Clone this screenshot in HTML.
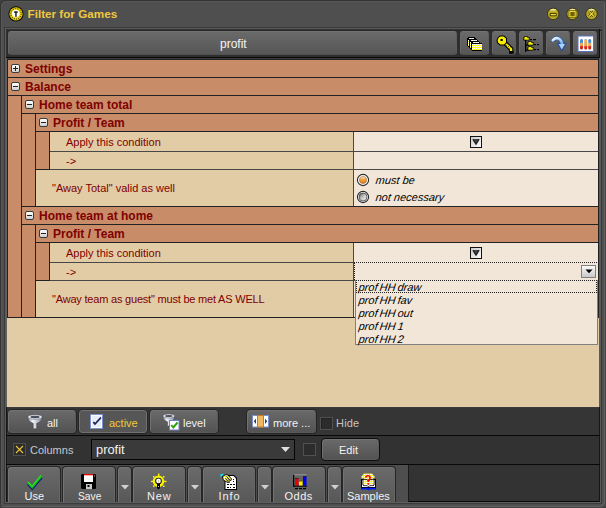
<!DOCTYPE html>
<html><head><meta charset="utf-8">
<style>
*{box-sizing:border-box;margin:0;padding:0}
html,body{width:606px;height:508px;overflow:hidden}
body{background:#3e3e3e;position:relative;font-family:"Liberation Sans",sans-serif}
.a{position:absolute}
.t{position:absolute;white-space:pre;line-height:1}
.btn{position:absolute;border-radius:3px;background:linear-gradient(#6a6a6a,#565656);border:1px solid #5e5e5e;border-top-color:#727272;border-left-color:#686868;border-bottom-color:#505050}
.btn.on{background:#555;border:1px solid #6c6c6c}
.ob{position:absolute;border:1px solid #252525;border-radius:4px;background:linear-gradient(#6a6a6a,#525252);box-shadow:inset 1px 1px 0 #727272,inset -1px -1px 0 #5a5a5a}
.ob.on{background:#565656;box-shadow:inset 0 0 0 1px #727272}
.tb{position:absolute;top:466px;height:36px;border:1px solid #262626;border-bottom:none;border-radius:4px 4px 0 0;background:linear-gradient(#6a6a6a,#585858);box-shadow:inset 1px 1px 0 #747474,inset -1px 0 0 #666}
.bt{font-size:11px;color:#f2f2f2;transform-origin:0 0}
.hl{position:absolute;height:1px}
.vl{position:absolute;width:1px}
.pm{position:absolute;width:9px;height:9px;border:1px solid #3a3a3a;border-radius:2px;background:linear-gradient(#ffffff,#d0d0d0)}
.pm:before{content:"";position:absolute;left:1px;top:3px;width:5px;height:1px;background:#222}
.pm.p:after{content:"";position:absolute;left:3px;top:1px;width:1px;height:5px;background:#222}
.hd{font-weight:bold;font-size:12px;color:#800000}
.lb{font-size:11px;color:#800000}
</style></head><body>

<!-- window frame -->
<div class="a" style="left:0;top:0;width:606px;height:508px;border-radius:5px;background:#4f4f4f;box-shadow:inset 1px 1px 0 #333,inset 2px 2px 0 #585858,inset -1px -1px 0 #444,inset -2px -2px 0 #606060"></div>

<!-- title icon -->
<svg class="a" style="left:8px;top:6px" width="16" height="16" viewBox="0 0 16 16">
<circle cx="8" cy="7.8" r="7.6" fill="#0a0a0a"/>
<circle cx="8" cy="7.8" r="6.6" fill="#e8d000"/>
<circle cx="8" cy="7.8" r="5.2" fill="none" stroke="#1a1a00" stroke-width="1" stroke-dasharray="1 1.3"/>
<circle cx="8" cy="7.8" r="6.3" fill="none" stroke="#a09000" stroke-width="0.6" stroke-dasharray="1.5 2"/>
<circle cx="7.8" cy="7.6" r="3.8" fill="#fff"/>
<rect x="6" y="5.4" width="3.8" height="1.4" fill="#222"/>
<rect x="7.2" y="5.4" width="1.5" height="5.5" fill="#222"/>
</svg>
<div class="t" style="left:27.5px;top:7.5px;font-size:11.7px;font-weight:bold;color:#f0c840">Filter for Games</div>

<!-- window buttons -->
<svg class="a" style="left:546px;top:6px" width="54" height="16" viewBox="0 0 54 16">
<defs>
<radialGradient id="wg" cx="0.5" cy="0.55" r="0.6"><stop offset="0" stop-color="#a89418"/><stop offset="0.7" stop-color="#c0b028"/><stop offset="1" stop-color="#8a7a10"/></radialGradient>
<linearGradient id="wh" x1="0" y1="0" x2="0" y2="1"><stop offset="0" stop-color="#fffff0"/><stop offset="1" stop-color="#e8d840" stop-opacity="0.2"/></linearGradient>
</defs>
<g id="wb1"><circle cx="7.2" cy="7.9" r="5.7" fill="url(#wg)" stroke="#302a08" stroke-width="0.8"/><ellipse cx="7.2" cy="4.3" rx="3" ry="1.5" fill="url(#wh)"/></g>
<rect x="4.2" y="7.6" width="6" height="2.2" fill="#f0e040" stroke="#302800" stroke-width="0.8"/>
<circle cx="26.5" cy="7.9" r="5.7" fill="url(#wg)" stroke="#302a08" stroke-width="0.8"/><ellipse cx="26.5" cy="4.3" rx="3" ry="1.5" fill="url(#wh)"/>
<rect x="22.8" y="4.4" width="7.4" height="7.4" fill="#302800"/>
<rect x="23.8" y="5.4" width="5.4" height="5.4" fill="#706000" stroke="#f0e040" stroke-width="1.1"/>
<circle cx="45.5" cy="7.9" r="5.7" fill="url(#wg)" stroke="#302a08" stroke-width="0.8"/><ellipse cx="45.5" cy="4.3" rx="3" ry="1.5" fill="url(#wh)"/>
<path d="M43.2 5.3 L47.8 10.5 M47.8 5.3 L43.2 10.5" stroke="#302800" stroke-width="2.4"/>
<path d="M43.2 5.3 L47.8 10.5 M47.8 5.3 L43.2 10.5" stroke="#f0e040" stroke-width="1.2"/>
</svg>

<!-- inner panel frame -->
<div class="a" style="left:4px;top:27px;width:598px;height:477px;background:#2e2e2e;box-shadow:inset 1px 1px 0 #3a3a3a,inset 2px 2px 0 #5a5a5a,inset 3px 3px 0 #333,inset 4px 4px 0 #2a2a2a,inset -1px -1px 0 #363636,inset -2px -2px 0 #5a5a5a"></div>

<!-- toolbar -->
<div class="btn" style="left:8px;top:31px;width:449px;height:24px"></div>
<div class="t" style="left:220px;top:38px;font-size:12px;color:#f4f4f4">profit</div>
<div class="btn" style="left:460px;top:31px;width:29px;height:24px"></div>
<div class="btn" style="left:492px;top:31px;width:24px;height:24px"></div>
<div class="btn" style="left:519px;top:31px;width:24px;height:24px"></div>
<div class="btn" style="left:546px;top:31px;width:24px;height:24px"></div>
<div class="btn" style="left:573px;top:31px;width:24px;height:24px;background:linear-gradient(#6a6a6a,#5c5c5c)"></div>
<div class="vl" style="left:599px;top:29px;height:28px;background:#111"></div>


<!-- toolbar icons -->
<svg class="a" style="left:465px;top:35px" width="20" height="18" viewBox="0 0 20 18" shape-rendering="crispEdges">
<defs><pattern id="chk" width="2" height="2" patternUnits="userSpaceOnUse"><rect width="2" height="2" fill="#ffff00"/><rect width="1" height="1" fill="#ffffff"/><rect x="1" y="1" width="1" height="1" fill="#ffffff"/></pattern></defs>
<path d="M2 3 L3 3 L3 2 L9 2 L10 3 L11 3 L11 4 L12 4 L12 5 L13 5 L13 6 L14 6 L14 7 L15 7 L15 8 L17 8 L17 16 L7 16 L7 15 L6 15 L6 14 L5 14 L5 13 L4 13 L4 12 L3 12 L3 11 L2 11 Z" fill="#000"/>
<rect x="4" y="3" width="5" height="1" fill="url(#chk)"/>
<rect x="3" y="5" width="1" height="6" fill="url(#chk)"/>
<rect x="6" y="5" width="5" height="1" fill="url(#chk)"/>
<rect x="5" y="7" width="1" height="6" fill="url(#chk)"/>
<rect x="8" y="7" width="5" height="1" fill="url(#chk)"/>
<rect x="11" y="5" width="1" height="1" fill="#fff"/>
<rect x="13" y="7" width="1" height="1" fill="#fff"/>
<rect x="7" y="9" width="10" height="6" fill="url(#chk)"/>
</svg>
<svg class="a" style="left:492px;top:32px" width="26" height="22" viewBox="0 0 26 22">
<path d="M12.5 10.5 L19 17 L19.3 19.5" stroke="#000" stroke-width="4.6" fill="none" stroke-linecap="square" stroke-linejoin="round"/>
<path d="M12.5 10.5 L19 17 L19.2 19" stroke="#f8f000" stroke-width="2.4" fill="none"/>
<path d="M6 5 L8 3.5 L12 3.5 L15 6 L15 11 L12.5 13.5 L8 13.5 L5 11 L4.5 8 Z" fill="#000"/>
<path d="M6.8 5.6 L8.4 4.5 L11.6 4.5 L14 6.5 L14 10.6 L12 12.5 L8.4 12.5 L6 10.5 L5.6 8 Z" fill="#f8f000"/>
<rect x="8.5" y="7" width="2.2" height="2" fill="#000"/>
<path d="M14.5 13.5 L15.2 12.8 M16 15 L16.7 14.3 M17.5 16.5 L18.2 15.8" stroke="#000" stroke-width="0.9"/>
</svg>
<svg class="a" style="left:523px;top:35px" width="18" height="18" viewBox="0 0 18 18">
<rect x="2" y="5" width="1.3" height="12" fill="#000"/>
<rect x="3" y="9.5" width="3" height="1.2" fill="#000"/>
<rect x="3" y="14.5" width="3" height="1.2" fill="#000"/>
<path d="M0.5 2 L2.5 1 L4 1 L5 2 L6.5 2 L6.5 5.5 L0.5 5.5 Z" fill="#000"/>
<path d="M1.3 2.5 L2.5 1.8 L3.8 1.8 L4.5 2.8 L5.8 2.8 L5.8 4.8 L1.3 4.8 Z" fill="#f0f000"/>
<path d="M4.5 7 L6.5 6 L8 6 L9 7 L10.5 7 L10.5 10.5 L4.5 10.5 Z" fill="#000"/>
<path d="M5.3 7.5 L6.5 6.8 L7.8 6.8 L8.5 7.8 L9.8 7.8 L9.8 9.8 L5.3 9.8 Z" fill="#f0f000"/>
<path d="M4.5 12 L6.5 11 L8 11 L9 12 L10.5 12 L10.5 15.5 L4.5 15.5 Z" fill="#000"/>
<path d="M5.3 12.5 L6.5 11.8 L7.8 11.8 L8.5 12.8 L9.8 12.8 L9.8 14.8 L5.3 14.8 Z" fill="#f0f000"/>
<rect x="7" y="4" width="2" height="1.2" fill="#000"/><rect x="10" y="4" width="3" height="1.2" fill="#000"/>
<rect x="11" y="9" width="2" height="1.2" fill="#000"/><rect x="14" y="9" width="2" height="1.2" fill="#000"/>
<rect x="11" y="14" width="2" height="1.2" fill="#000"/><rect x="14" y="14" width="2" height="1.2" fill="#000"/>
</svg>
<svg class="a" style="left:546px;top:32px" width="26" height="22" viewBox="0 0 26 22">
<defs><linearGradient id="arw" x1="0" y1="0" x2="1" y2="1"><stop offset="0" stop-color="#f0f8ff"/><stop offset="1" stop-color="#78b4e8"/></linearGradient></defs>
<path d="M6.8 8.3 C9 5.3 14.5 4.8 16 11.5" stroke="#3060b0" stroke-width="3.9" fill="none" stroke-linecap="round"/>
<path d="M11.2 11.2 L20.3 11.2 L15.8 19.2 Z" fill="#2850a0" stroke="#2850a0" stroke-width="1" stroke-linejoin="round"/>
<path d="M6.8 8.3 C9 5.3 14.5 4.8 16 11.5" stroke="url(#arw)" stroke-width="2.6" fill="none" stroke-linecap="round"/>
<path d="M12.6 12 L19 12 L15.8 17.6 Z" fill="#a8d4f8"/>
</svg>
<svg class="a" style="left:577px;top:35px" width="18" height="18" viewBox="0 0 18 18">
<defs>
<linearGradient id="tb1" x1="0" y1="0" x2="0" y2="1"><stop offset="0" stop-color="#3a80d0"/><stop offset="0.33" stop-color="#5090d8"/><stop offset="0.4" stop-color="#e8b060"/><stop offset="0.62" stop-color="#e8a050"/><stop offset="0.7" stop-color="#e03020"/><stop offset="1" stop-color="#c02010"/></linearGradient>
<linearGradient id="tb2" x1="0" y1="0" x2="0" y2="1"><stop offset="0" stop-color="#4a88d0"/><stop offset="0.12" stop-color="#e8b060"/><stop offset="0.65" stop-color="#e8a050"/><stop offset="0.72" stop-color="#e03020"/><stop offset="1" stop-color="#c02010"/></linearGradient>
</defs>
<rect x="1" y="1" width="15.5" height="15.5" fill="#fff" stroke="#5a70c0" stroke-width="1"/>
<rect x="3" y="4" width="3" height="10.5" rx="1.5" fill="url(#tb1)"/>
<rect x="7.2" y="4" width="3" height="10.5" rx="1.5" fill="url(#tb2)"/>
<rect x="11.2" y="4" width="3" height="10.5" rx="1.5" fill="url(#tb1)"/>
</svg>

<!-- tree area -->
<div class="hl" style="left:6px;top:57px;width:594px;background:#0a0a0a"></div>
<div class="a" style="left:6px;top:58px;width:594px;height:349px;background:#3a3a3a"></div>
<div class="a" style="left:7px;top:59px;width:592px;height:348px;background:#e2cca6"></div>
<div class="vl" style="left:6px;top:58px;height:349px;background:#626262"></div><div class="vl" style="left:599px;top:58px;height:349px;background:#5a5a5a"></div>
<div class="a" style="left:7px;top:59px;width:592px;height:259px;background:#c88c69;border:1px solid #222"></div>


<!-- tree rows lines -->
<div class="hl" style="left:7px;top:77px;width:592px;background:#222"></div>
<div class="hl" style="left:7px;top:95px;width:592px;background:#222"></div>
<div class="vl" style="left:21px;top:95px;height:222px;background:#222"></div>
<div class="hl" style="left:21px;top:113px;width:578px;background:#222"></div>
<div class="vl" style="left:35px;top:113px;height:93px;background:#222"></div>
<div class="hl" style="left:35px;top:131px;width:564px;background:#222"></div>
<div class="vl" style="left:49px;top:131px;height:38px;background:#222"></div>
<div class="hl" style="left:35px;top:169px;width:15px;background:#222"></div><div class="hl" style="left:50px;top:169px;width:548px;background:#484848"></div>
<div class="hl" style="left:21px;top:206px;width:578px;background:#222"></div>
<div class="hl" style="left:21px;top:224px;width:578px;background:#222"></div>
<div class="vl" style="left:35px;top:224px;height:93px;background:#222"></div>
<div class="hl" style="left:35px;top:242px;width:564px;background:#222"></div>
<div class="vl" style="left:49px;top:242px;height:38px;background:#222"></div>
<div class="hl" style="left:35px;top:280px;width:15px;background:#222"></div><div class="hl" style="left:50px;top:280px;width:548px;background:#484848"></div>

<!-- data cells group 1 -->
<div class="a" style="left:50px;top:132px;width:303px;height:19px;background:#e2cca6"></div>
<div class="a" style="left:354px;top:132px;width:244px;height:19px;background:#f2e6d8"></div>
<div class="hl" style="left:50px;top:151px;width:548px;background:#484848"></div>
<div class="a" style="left:50px;top:152px;width:303px;height:17px;background:#e2cca6"></div>
<div class="a" style="left:354px;top:152px;width:244px;height:17px;background:#f2e6d8"></div>
<div class="a" style="left:36px;top:170px;width:317px;height:36px;background:#e2cca6"></div>
<div class="a" style="left:354px;top:170px;width:244px;height:36px;background:#f2e6d8"></div>
<div class="vl" style="left:353px;top:132px;height:74px;background:#484848"></div>
<!-- data cells group 2 -->
<div class="a" style="left:50px;top:243px;width:303px;height:19px;background:#e2cca6"></div>
<div class="a" style="left:354px;top:243px;width:244px;height:19px;background:#f2e6d8"></div>
<div class="hl" style="left:50px;top:262px;width:304px;background:#484848"></div><div class="hl" style="left:354px;top:262px;width:244px;background:#f2e6d8"></div>
<div class="a" style="left:50px;top:263px;width:303px;height:17px;background:#e2cca6"></div>
<div class="a" style="left:354px;top:263px;width:244px;height:17px;background:#f2e6d8"></div>
<div class="a" style="left:36px;top:281px;width:317px;height:36px;background:#e2cca6"></div>
<div class="a" style="left:354px;top:281px;width:244px;height:36px;background:#f2e6d8"></div>
<div class="vl" style="left:353px;top:243px;height:74px;background:#484848"></div>

<!-- plus/minus -->
<div class="pm p" style="left:11px;top:64px"></div>
<div class="pm" style="left:11px;top:82px"></div>
<div class="pm" style="left:25px;top:100px"></div>
<div class="pm" style="left:39px;top:118px"></div>
<div class="pm" style="left:25px;top:211px"></div>
<div class="pm" style="left:39px;top:229px"></div>

<!-- header texts -->
<div class="t hd" style="left:25px;top:63px">Settings</div>
<div class="t hd" style="left:25px;top:81px">Balance</div>
<div class="t hd" style="left:39px;top:99px">Home team total</div>
<div class="t hd" style="left:53px;top:117px">Profit / Team</div>
<div class="t hd" style="left:39px;top:210px">Home team at home</div>
<div class="t hd" style="left:53px;top:228px">Profit / Team</div>

<!-- labels -->
<div class="t lb" style="left:66px;top:137px">Apply this condition</div>
<div class="t lb" style="left:66px;top:156px">-&gt;</div>
<div class="t lb" style="left:52px;top:183px">"Away Total" valid as well</div>
<div class="t lb" style="left:66px;top:248px">Apply this condition</div>
<div class="t lb" style="left:66px;top:267px">-&gt;</div>
<div class="t lb" style="left:52px;top:294px;letter-spacing:-0.2px">"Away team as guest" must be met AS WELL</div>


<!-- checkboxes -->
<svg class="a" style="left:470px;top:136px" width="12" height="12" viewBox="0 0 12 12"><defs><linearGradient id="cbg" x1="0" y1="0" x2="1" y2="1"><stop offset="0" stop-color="#c8c8c8"/><stop offset="1" stop-color="#ffffff"/></linearGradient></defs><rect x="0.5" y="0.5" width="11" height="11" fill="url(#cbg)" stroke="#111"/><path d="M2.5 3 L9.5 3 L6 9.5 Z" fill="#444"/><path d="M3 3.5 L6 8 M6 8 L9 3.2" stroke="#222" stroke-width="1.3" fill="none"/></svg>
<svg class="a" style="left:470px;top:247px" width="12" height="12" viewBox="0 0 12 12"><rect x="0.5" y="0.5" width="11" height="11" fill="url(#cbg)" stroke="#111"/><path d="M2.5 3 L9.5 3 L6 9.5 Z" fill="#444"/><path d="M3 3.5 L6 8 M6 8 L9 3.2" stroke="#222" stroke-width="1.3" fill="none"/></svg>

<!-- radios -->
<svg class="a" style="left:356px;top:173px" width="14" height="31" viewBox="0 0 14 31">
<defs>
<linearGradient id="ro" x1="0" y1="0" x2="0" y2="1"><stop offset="0" stop-color="#fff0d0"/><stop offset="0.45" stop-color="#f4a040"/><stop offset="1" stop-color="#e07810"/></linearGradient>
<linearGradient id="rg" x1="0" y1="0" x2="1" y2="1"><stop offset="0" stop-color="#505050"/><stop offset="0.5" stop-color="#c8c8c8"/><stop offset="1" stop-color="#f0f0f0"/></linearGradient>
</defs>
<circle cx="7" cy="7" r="5.6" fill="#fafafa" stroke="#2a2a2a" stroke-width="1.1"/>
<circle cx="7" cy="7" r="3.6" fill="url(#ro)" stroke="#9a6a40" stroke-width="0.6"/>
<circle cx="7" cy="24" r="5.6" fill="#fafafa" stroke="#2a2a2a" stroke-width="1.1"/>
<circle cx="7" cy="24" r="4" fill="url(#rg)" stroke="#333" stroke-width="0.7"/>
</svg>
<div class="t" style="left:375px;top:175px;font-size:11px;font-style:italic;color:#000;transform:skewX(-7deg);transform-origin:0 100%">must be</div>
<div class="t" style="left:375px;top:192px;font-size:11px;font-style:italic;color:#000;transform:skewX(-7deg);transform-origin:0 100%">not necessary</div>

<!-- combo in -> row 2 -->
<div class="a" style="left:354px;top:262px;width:245px;height:18px;border:1px dotted #222;border-bottom:none"></div>
<div class="a" style="left:581px;top:265px;width:15px;height:13px;border:1px solid #808080;background:linear-gradient(#fafafa,#c8c8c8)"></div>
<svg class="a" style="left:585px;top:269px" width="8" height="5" viewBox="0 0 8 5"><path d="M0.5 0.5 L7.5 0.5 L4 4.2 Z" fill="#000"/></svg>
<!-- dropdown list -->
<div class="a" style="left:355px;top:280px;width:243px;height:65px;background:#f2e6d8;border:1px solid #808080;border-top:none"></div>
<div class="a" style="left:356px;top:280px;width:241px;height:13px;border:1px dotted #222"></div>
<div class="t" style="left:358px;top:282px;font-size:11px;font-style:italic;color:#000;transform:skewX(-7deg);transform-origin:0 100%;word-spacing:-1px">prof HH draw</div>
<div class="t" style="left:358px;top:295px;font-size:11px;font-style:italic;color:#000;transform:skewX(-7deg);transform-origin:0 100%;word-spacing:-1px">prof HH fav</div>
<div class="t" style="left:358px;top:308px;font-size:11px;font-style:italic;color:#000;transform:skewX(-7deg);transform-origin:0 100%;word-spacing:-1px">prof HH out</div>
<div class="t" style="left:358px;top:321px;font-size:11px;font-style:italic;color:#000;transform:skewX(-7deg);transform-origin:0 100%;word-spacing:-1px">prof HH 1</div>
<div class="t" style="left:358px;top:334px;font-size:11px;font-style:italic;color:#000;transform:skewX(-7deg);transform-origin:0 100%;word-spacing:-1px">prof HH 2</div>

<!-- bottom bars -->
<div class="a" style="left:6px;top:407px;width:594px;height:96px;background:#353535;border-left:1px solid #161616;border-right:1px solid #161616"></div>
<div class="hl" style="left:7px;top:407px;width:592px;background:#3a3a3a"></div>
<div class="hl" style="left:6px;top:435px;width:594px;background:#080808"></div>
<div class="a" style="left:7px;top:436px;width:592px;height:28px;background:#323232"></div>
<div class="hl" style="left:6px;top:464px;width:594px;background:#080808"></div>
<div class="a" style="left:7px;top:465px;width:401px;height:37px;background:#4e4e4e"></div>
<div class="vl" style="left:408px;top:465px;height:37px;background:#1a1a1a"></div>
<div class="a" style="left:409px;top:465px;width:190px;height:36px;background:#333"></div>
<div class="hl" style="left:409px;top:501px;width:190px;background:#080808"></div>
<div class="hl" style="left:6px;top:502px;width:595px;background:#5e5e5e"></div>
<div class="hl" style="left:5px;top:503px;width:597px;background:#3c3c3c"></div>

<!-- filter bar buttons -->
<div class="ob" style="left:7px;top:409px;width:70px;height:25px"></div>
<div class="ob on" style="left:78px;top:409px;width:70px;height:25px"></div>
<div class="ob" style="left:149px;top:409px;width:70px;height:25px"></div>
<div class="ob" style="left:246px;top:409px;width:71px;height:25px"></div>
<div class="t bt" style="left:47px;top:418px">all</div>
<div class="t bt" style="left:109px;top:418px;color:#f4c838">active</div>
<div class="t bt" style="left:183px;top:418px">level</div>
<div class="t bt" style="left:273px;top:418px">more ...</div>
<div class="a" style="left:320px;top:417px;width:13px;height:13px;border:1px solid #505050;background:#2c2c2c;box-shadow:inset 1px 1px 0 #222"></div>
<div class="t bt" style="left:336px;top:418px;color:#c4c4c4;letter-spacing:0.2px">Hide</div>

<!-- columns bar -->
<div class="a" style="left:13px;top:443px;width:13px;height:13px;border:1px solid #505050;background:#2c2c2c"></div>
<svg class="a" style="left:13px;top:443px" width="13" height="13" viewBox="0 0 13 13"><path d="M3 3 L10 10 M10 3 L3 10" stroke="#e8c840" stroke-width="1.1"/></svg>
<div class="t bt" style="left:30px;top:445px;color:#c4c8d0">Columns</div>
<div class="a" style="left:91px;top:439px;width:204px;height:21px;background:#3a3a3a;border:1px solid #050505"></div>
<div class="t bt" style="left:96px;top:444px;font-size:12px;transform:scaleX(1.07);text-shadow:none">profit</div>
<svg class="a" style="left:281px;top:447px" width="9" height="5" viewBox="0 0 9 5"><path d="M0 0 L9 0 L4.5 5 Z" fill="#e0e0e0"/></svg>
<div class="a" style="left:303px;top:443px;width:13px;height:13px;border:1px solid #505050;background:#2c2c2c"></div>
<div class="ob" style="left:321px;top:438px;width:59px;height:23px;border-color:#0e0e0e"></div>
<div class="t bt" style="left:339px;top:445px">Edit</div>

<!-- bottom toolbar -->
<div class="tb" style="left:7px;width:54px"></div>
<div class="tb" style="left:62px;width:54px"></div>
<div class="tb" style="left:117px;width:15px"></div>
<div class="tb" style="left:132px;width:54px"></div>
<div class="tb" style="left:187px;width:15px"></div>
<div class="tb" style="left:202px;width:54px"></div>
<div class="tb" style="left:257px;width:15px"></div>
<div class="tb" style="left:272px;width:54px"></div>
<div class="tb" style="left:327px;width:15px"></div>
<div class="tb" style="left:342px;width:54px"></div>
<div class="t bt" style="left:24.5px;top:491px">Use</div>
<div class="t bt" style="left:77.5px;top:491px;transform:scaleX(0.93)">Save</div>
<div class="t bt" style="left:147px;top:491px;letter-spacing:0.8px">New</div>
<div class="t bt" style="left:218.5px;top:491px;letter-spacing:0.9px">Info</div>
<div class="t bt" style="left:284.5px;top:491px;letter-spacing:0.5px">Odds</div>
<div class="t bt" style="left:347px;top:491px">Samples</div>

<!-- filter bar icons -->
<svg class="a" style="left:27px;top:414px" width="16" height="16" viewBox="0 0 16 16">
<defs><linearGradient id="fun" x1="0" y1="0" x2="1" y2="0"><stop offset="0" stop-color="#8890a0"/><stop offset="0.35" stop-color="#f4f6fa"/><stop offset="1" stop-color="#8088a0"/></linearGradient></defs>
<path d="M0.8 3 C0.8 7.5 5 9 6.3 9.3 L6.3 14.2 C6.3 15 9.7 15 9.7 14.2 L9.7 9.3 C11 9 15.2 7.5 15.2 3 Z" fill="url(#fun)" stroke="#3a3a40" stroke-width="0.5"/>
<ellipse cx="8" cy="3" rx="7.2" ry="2.3" fill="#e8eaf0" stroke="#50545c" stroke-width="0.5"/>
<ellipse cx="8" cy="3" rx="4.6" ry="1.2" fill="#4a5060"/>
</svg>
<svg class="a" style="left:90px;top:414px" width="14" height="15" viewBox="0 0 14 15">
<rect x="0.5" y="0.5" width="12" height="14" fill="#fff" stroke="#7a90d0" stroke-width="1"/>
<rect x="2" y="2" width="9" height="11" fill="#e8ecf8"/>
<path d="M3.3 8 L5 10 L11 3.5" stroke="#1a2050" stroke-width="1.8" fill="none"/>
</svg>
<svg class="a" style="left:162px;top:413px" width="18" height="18" viewBox="0 0 18 18">
<path d="M0.8 3 C0.8 7 4.5 8.5 5.5 8.8 L5.5 12.5 C5.5 13.2 8 13.2 8 12.5 L8 8.8 C9 8.5 12.8 7 12.8 3 Z" fill="url(#fun)" stroke="#3a3a40" stroke-width="0.5"/>
<ellipse cx="6.8" cy="3" rx="6" ry="2" fill="#e8eaf0" stroke="#50545c" stroke-width="0.5"/>
<ellipse cx="6.8" cy="3" rx="3.8" ry="1" fill="#4a5060"/>
<rect x="7.5" y="7.5" width="9.5" height="9.5" fill="#fff" stroke="#7080c8" stroke-width="1"/>
<path d="M9.3 12 L11.3 14.5 L15.5 9.5" stroke="#30a010" stroke-width="2" fill="none"/>
</svg>
<svg class="a" style="left:252px;top:415px" width="17" height="13" viewBox="0 0 17 13">
<rect x="0.5" y="0.5" width="16" height="11.5" fill="#fff" stroke="#7a90d0" stroke-width="1"/>
<rect x="5.5" y="0.5" width="6" height="11.5" fill="#f0b860" stroke="#d07820" stroke-width="1"/>
<path d="M4 3.5 L4 9 L1.8 6.2 Z" fill="#283870"/>
<path d="M13 3.5 L13 9 L15.2 6.2 Z" fill="#283870"/>
</svg>

<!-- bottom toolbar icons -->
<svg class="a" style="left:20px;top:468px" width="30" height="24" viewBox="0 0 30 24">
<path d="M8 15.8 L12.2 20.3 L21.5 9.5" stroke="#000090" stroke-width="2.6" fill="none" stroke-linejoin="miter"/>
<path d="M8 14.6 L12.2 19.1 L21.5 7.8" stroke="#10b810" stroke-width="2.6" fill="none" stroke-linejoin="miter"/>
<path d="M7.6 13.7 L12.2 18.3 L21 7.2" stroke="#38f038" stroke-width="1" fill="none"/>
</svg>
<svg class="a" style="left:81px;top:473px" width="16" height="17" viewBox="0 0 16 17">
<path d="M1 1 L14 1 L15 2 L15 15.5 L14 16 L1 16 L0 15 L0 2 Z" fill="#000"/>
<rect x="3" y="1" width="9" height="8" fill="#fff"/>
<rect x="3" y="1" width="9" height="1.3" fill="#f00000"/>
<rect x="5" y="11" width="6" height="5" fill="#c8c8c8"/>
<rect x="6.5" y="12" width="2" height="2" fill="#000"/>
<rect x="13" y="2.5" width="1" height="1" fill="#bbb"/>
</svg>
<svg class="a" style="left:146px;top:468px" width="26" height="24" viewBox="0 0 26 24">
<circle cx="12.5" cy="13.3" r="5.8" fill="#f8f000"/>
<rect x="12" y="5.5" width="1.4" height="3" fill="#f8f000"/>
<rect x="5" y="12.8" width="3" height="1.3" fill="#f8f000"/>
<rect x="17.5" y="12.8" width="3" height="1.3" fill="#f8f000"/>
<rect x="7" y="8" width="1.5" height="1.5" fill="#f8f000"/><rect x="17" y="8" width="1.5" height="1.5" fill="#f8f000"/>
<rect x="7" y="17.5" width="1.5" height="1.5" fill="#f8f000"/><rect x="17" y="17.5" width="1.5" height="1.5" fill="#f8f000"/>
<circle cx="12.5" cy="13" r="3.3" fill="#000"/>
<circle cx="12.5" cy="13" r="2.4" fill="#fff"/>
<rect x="12" y="12" width="1" height="2.5" fill="#c8c0a0"/>
<path d="M11 15.5 L14 15.5 L14 20 L12.5 21.5 L11 20 Z" fill="#000"/>
<rect x="12" y="18" width="1" height="1" fill="#ccc"/>
</svg>
<svg class="a" style="left:220px;top:473px" width="18" height="18" viewBox="0 0 18 18">
<path d="M5 2 L14 2 L17 5 L17 17 L4.5 17 L4.5 8 Z" fill="#000"/>
<path d="M6 3 L13.5 3 L16 5.5 L16 16 L5.5 16 L5.5 8 Z" fill="#fff"/>
<rect x="7" y="11" width="2" height="1" fill="#000"/><rect x="10" y="11" width="2" height="1" fill="#000"/><rect x="13" y="11" width="2" height="1" fill="#000"/>
<rect x="7" y="14" width="2" height="1" fill="#000"/><rect x="10" y="14" width="1" height="1" fill="#000"/><rect x="13" y="14" width="2" height="1" fill="#000"/>
<rect x="13" y="8" width="1" height="1" fill="#000"/><rect x="13" y="6" width="1" height="1" fill="#000"/>
<path d="M0.5 1 L4 1 L0.5 4.5 Z" fill="#00e8f8"/>
<path d="M2 3.5 L5 1.5 L8 1.5 L12 6 L11 8 L9 7 L10 9.5 L8 10 L5 8.5 L3 7 Z" fill="#000"/>
<path d="M3 3.8 L5.2 2.3 L7.5 2.3 L11 6 L10.3 7 L8.5 6.2 L9 9 L8 9.2 L5.2 7.8 L3.5 6.5 Z" fill="url(#ydot)"/>
<path d="M6.5 3.5 L10 7.5 M5.5 5.5 L8.5 9" stroke="#000" stroke-width="0.9"/><path d="M7.3 2.8 L10.5 6.3" stroke="#f8f020" stroke-width="0.8"/>
</svg>
<svg class="a" style="left:292px;top:474px" width="16" height="17" viewBox="0 0 16 17">
<rect x="1" y="1" width="1.2" height="11.5" fill="#000"/>
<rect x="1" y="11.5" width="14" height="1.2" fill="#000"/>
<rect x="2.5" y="0.5" width="12" height="0.7" fill="#aaa"/>
<rect x="3" y="4" width="3.5" height="7.5" fill="#f00000"/><rect x="3" y="4" width="3.5" height="0.9" fill="#222"/>
<rect x="7" y="6.5" width="3.5" height="5" fill="#f8f000"/><rect x="7" y="6.5" width="3.5" height="0.9" fill="#222"/>
<rect x="11" y="2" width="3.5" height="9.5" fill="#0000f0"/><rect x="11" y="2" width="3.5" height="0.9" fill="#222"/>
<rect x="3" y="14" width="3" height="1.2" fill="#000"/><rect x="7" y="14" width="3" height="1.2" fill="#000"/><rect x="11" y="14" width="3" height="1.2" fill="#000"/>
</svg>
<svg class="a" style="left:356px;top:468px" width="26" height="24" viewBox="0 0 26 24">
<defs><pattern id="ydot" width="2" height="2" patternUnits="userSpaceOnUse"><rect width="2" height="2" fill="#f8f020"/><rect width="1" height="1" fill="#fffff0"/></pattern></defs>
<path d="M8 5.5 L16 5.5 L18.5 8.5 L18.5 16 L5.5 16 L5.5 8.5 Z" fill="url(#ydot)"/>
<path d="M5 11 L7 10.5 L11.5 11.5 L12.5 12.5 L13.5 11.5 L18 10.5 L20 11 L20 20 L5 20 Z" fill="#000"/>
<path d="M6 12 L11 12.5 L12.5 14 L14 12.5 L19 12 L19 19 L6 19 Z" fill="#fff"/>
<path d="M7 12 L7 17 M18 12 L18 17" stroke="#000" stroke-width="1"/>
<path d="M7.5 11.5 L11 12 L12.5 13.5 L14 12 L17.5 11.5 L17.5 16 L7.5 16 Z" fill="url(#ydot)" opacity="0.9"/>
<path d="M9 9.5 C9 6 15 6 15 9.5 C15 11.5 13 11.8 13 14 L11.5 14 C11.5 11 13.3 11 13.3 9.5 C13.3 8 10.8 8 10.8 9.5 Z" fill="#f00000"/>
<rect x="11.5" y="15" width="1.6" height="1.8" fill="#f00000"/>
<path d="M7 17.5 L11.5 17.8 L12.5 18.8 L13.5 17.8 L18 17.5" stroke="#000" stroke-width="0.8" fill="none"/>
<path d="M5 19.8 L20 19.8 L20 21.5 L14 21.5 L12.5 22.5 L11 21.5 L5 21.5 Z" fill="#0018f0"/>
</svg>

<!-- dropdown triangles -->
<svg class="a" style="left:121px;top:485px" width="9" height="5" viewBox="0 0 9 5"><path d="M0 0 L8 0 L4 4.5 Z" fill="#d0d0d0"/></svg>
<svg class="a" style="left:191px;top:485px" width="9" height="5" viewBox="0 0 9 5"><path d="M0 0 L8 0 L4 4.5 Z" fill="#d0d0d0"/></svg>
<svg class="a" style="left:261px;top:485px" width="9" height="5" viewBox="0 0 9 5"><path d="M0 0 L8 0 L4 4.5 Z" fill="#d0d0d0"/></svg>
<svg class="a" style="left:331px;top:485px" width="9" height="5" viewBox="0 0 9 5"><path d="M0 0 L8 0 L4 4.5 Z" fill="#d0d0d0"/></svg>

</body></html>
